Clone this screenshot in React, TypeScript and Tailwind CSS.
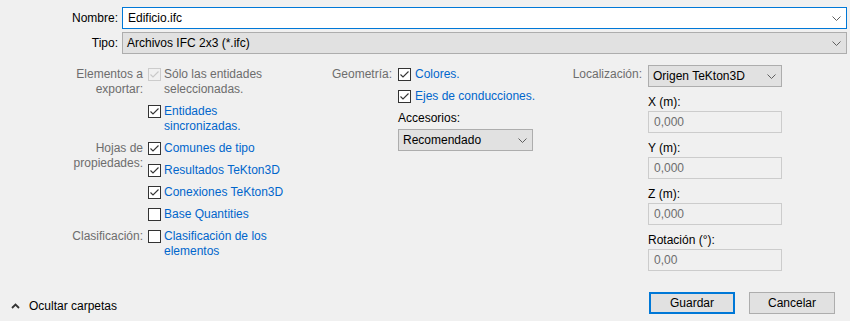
import React from "react";

function Chevron({ className = "" }: { className?: string }) {
  return (
    <svg width="9" height="5" viewBox="0 0 9 5" className={className}>
      <path d="M0.5 0.5 L4.5 4.5 L8.5 0.5" fill="none" stroke="#5f5f5f" strokeWidth="1" />
    </svg>
  );
}

function Check({ checked, disabled = false }: { checked: boolean; disabled?: boolean }) {
  return (
    <span
      className={
        "mt-[1px] flex h-[13px] w-[13px] shrink-0 items-center justify-center border " +
        (disabled ? "border-[#cccccc] bg-[#f0f0f0]" : "border-[#333333] bg-white")
      }
    >
      {checked && (
        <svg width="11" height="11" viewBox="0 0 11 11">
          <path
            d="M1.5 5.5 L4 8 L9.5 2.5"
            fill="none"
            stroke={disabled ? "#c8c8c8" : "#333333"}
            strokeWidth="1.1"
          />
        </svg>
      )}
    </span>
  );
}

function Item({
  checked,
  disabled,
  children,
  gap = "gap-[3px]",
}: {
  checked: boolean;
  disabled?: boolean;
  children: React.ReactNode;
  gap?: string;
}) {
  return (
    <div className={"flex items-start " + gap}>
      <Check checked={checked} disabled={disabled} />
      <span className={disabled ? "text-[#6d6d6d]" : "text-[#0066cc]"}>{children}</span>
    </div>
  );
}

function Select({ value, className = "" }: { value: string; className?: string }) {
  return (
    <div
      className={
        "flex h-[22px] items-center justify-between border border-[#adadad] bg-[#e1e1e1] pl-[4px] pr-[5px] " +
        className
      }
    >
      <span>{value}</span>
      <Chevron />
    </div>
  );
}

function Field({ label, value }: { label: string; value: string }) {
  return (
    <div className="flex flex-col gap-[1px]">
      <span>{label}</span>
      <div className="flex h-[22px] items-center border border-[#cccccc] bg-[#f0f0f0] pl-[5px] text-[#6d6d6d]">
        {value}
      </div>
    </div>
  );
}

export default function App() {
  return (
    <div
      className="flex h-[321px] w-[850px] flex-col bg-[#f0f0f0] text-[12px] leading-[15px] text-black"
      style={{ fontFamily: '"Liberation Sans", Arial, sans-serif' }}
    >
      <div className="flex flex-col gap-[3px] pr-[3px] pt-[7px]">
        <div className="flex items-center gap-[4px]">
          <span className="w-[118px] text-right">Nombre:</span>
          <div className="flex h-[22px] flex-1 items-center justify-between border border-[#0078d7] bg-white pl-[5px] pr-[5px]">
            <span>Edificio.ifc</span>
            <Chevron />
          </div>
        </div>
        <div className="flex items-center gap-[4px]">
          <span className="w-[118px] text-right">Tipo:</span>
          <Select value="Archivos IFC 2x3 (*.ifc)" className="flex-1" />
        </div>
      </div>

      <div className="mt-[13px] flex items-start">
        {/* left column */}
        <div className="grid w-[300px] grid-cols-[143px_1fr] content-start gap-x-[5px] gap-y-[7px]">
          <span className="text-right text-[#6d6d6d]">
            Elementos a
            <br />
            exportar:
          </span>
          <div className="flex flex-col gap-[7px]">
            <Item checked disabled>
              Sólo las entidades
              <br />
              seleccionadas.
            </Item>
            <Item checked>
              Entidades
              <br />
              sincronizadas.
            </Item>
          </div>
          <span className="text-right text-[#6d6d6d]">
            Hojas de
            <br />
            propiedades:
          </span>
          <div className="flex flex-col gap-[7px]">
            <Item checked>Comunes de tipo</Item>
            <Item checked>Resultados TeKton3D</Item>
            <Item checked>Conexiones TeKton3D</Item>
            <Item checked={false}>Base Quantities</Item>
          </div>
          <span className="text-right text-[#6d6d6d]">Clasificación:</span>
          <Item checked={false}>
            Clasificación de los
            <br />
            elementos
          </Item>
        </div>

        {/* middle column */}
        <div className="flex w-[260px] items-start gap-[6px]">
          <span className="w-[92px] text-right text-[#6d6d6d]">Geometría:</span>
          <div className="flex flex-col">
            <div className="flex flex-col gap-[7px]">
              <Item checked gap="gap-[4px]">
                Colores.
              </Item>
              <Item checked gap="gap-[4px]">
                Ejes de conducciones.
              </Item>
              <span>Accesorios:</span>
            </div>
            <Select value="Recomendado" className="mt-[3px] w-[135px]" />
          </div>
        </div>

        {/* right column */}
        <div className="flex items-start gap-[6px]">
          <span className="w-[82px] text-right text-[#6d6d6d]">Localización:</span>
          <div className="-mt-[2px] flex w-[134px] flex-col gap-[8px]">
            <Select value="Origen TeKton3D" />
            <Field label="X (m):" value="0,000" />
            <Field label="Y (m):" value="0,000" />
            <Field label="Z (m):" value="0,000" />
            <Field label="Rotación (°):" value="0,00" />
          </div>
        </div>
      </div>

      <div className="mt-auto mb-[7px] flex items-center justify-between pr-[15px]">
        <div className="mt-[6px] flex items-center gap-[9px] pl-[11px]">
          <svg width="9" height="6" viewBox="0 0 9 6">
            <path d="M1 5 L4.5 1.5 L8 5" fill="none" stroke="#333333" strokeWidth="1.8" />
          </svg>
          <span>Ocultar carpetas</span>
        </div>
        <div className="flex gap-[14px]">
          <button className="h-[22px] w-[86px] border-2 border-[#0078d7] bg-[#e1e1e1]">Guardar</button>
          <button className="h-[22px] w-[86px] border border-[#adadad] bg-[#e1e1e1]">Cancelar</button>
        </div>
      </div>
    </div>
  );
}
